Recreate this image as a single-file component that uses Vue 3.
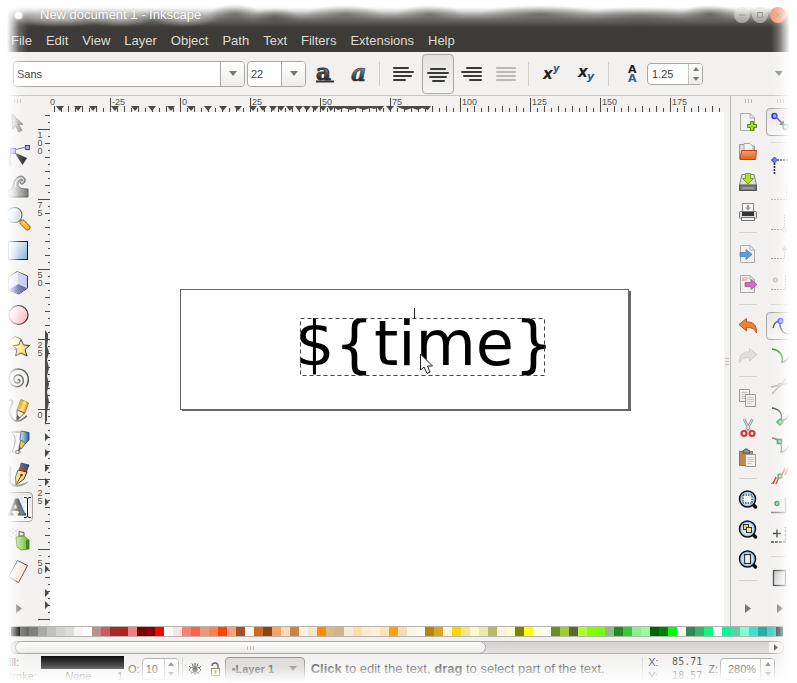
<script setup>
import { ref } from 'vue'

const menus = ['File', 'Edit', 'View', 'Layer', 'Object', 'Path', 'Text', 'Filters', 'Extensions', 'Help']

const family = ref('Sans')
const size = ref('22')
const spacing = ref('1.25')
const opacity = ref('10')
const zoom = ref('280%')
const scroll = ref(0)

const tools = [
  { name: 'Select', art: '<path d="M5 3L16 13.500L11.500 13.500L15 19.500L11.500 21L9 15L5.500 18Z" fill="url(#g-steel)" stroke="#777" stroke-width=".7"/>' },
  { name: 'Edit nodes', art: '<path d="M3 21C2 14 4 8 8 7C13 5 17 4.500 20 4.500" fill="none" stroke="#555"/><rect x="3.500" y="5.500" width="5" height="5" fill="#99f" stroke="#44e"/><rect x="18.500" y="2.500" width="4" height="4" fill="#aaf" stroke="#33e"/><path d="M7.500 9.500L20 15L15.500 22Z" fill="#222"/><rect x="1" y="20" width="3" height="3" fill="none" stroke="#aac"/>' },
  { name: 'Tweak', art: '<path d="M1 15C5 15 6 12 7 7C9 1 16-1 18 4C19 8 15 11 13 8C12 6 15 4 16 6C16 3 11 4 11 9C11 13 14 14 21 14V22H1Z" fill="url(#g-steel)" stroke="#666" stroke-width="1"/><path d="M8 12C8 6 11 3 15 3M14 7C16 8 18 4 15 3" fill="none" stroke="#fff" stroke-width="1"/>' },
  { name: 'Zoom', art: '<path d="M12 12L16 16" stroke="#777" stroke-width="3"/><path d="M15.500 15.500L20.500 20.500" stroke="#a55f00" stroke-width="6" stroke-linecap="round"/><path d="M15.500 15.500L20.500 20.500" stroke="#f9b52a" stroke-width="4" stroke-linecap="round"/><path d="M16 14.500L20.500 19" stroke="#ffe28a" stroke-width="1"/><circle cx="7.500" cy="8" r="7.500" fill="#eef5fb" stroke="#555" stroke-width="1.200"/><circle cx="7.500" cy="8" r="6" fill="url(#g-sky)" opacity=".5"/>' },
  { name: 'Rectangle', art: '<rect x="1.500" y="2.500" width="19" height="18" fill="url(#g-sky)" stroke="#111"/>' },
  { name: '3D box', art: '<path d="M10 0.500L20.500 5V17L12 23L1.500 19V6Z" fill="#f1f1fd" stroke="#333"/><path d="M11 1L20 5.500V16.500L11 13Z" fill="#c9c9f2"/><path d="M11 13L20 17L12 22.500L2 18.500Z" fill="#5c5ca8"/><path d="M2 6.500L11 1V13L2 18.500Z" fill="#e3e3fa"/>' },
  { name: 'Ellipse', art: '<circle cx="11.500" cy="12" r="9.500" fill="url(#g-pink)" stroke="#222" stroke-width="1.100"/>' },
  { name: 'Star', art: '<path d="M2 6L8 1.500L14 4L15 11L9 15L1 12Z" fill="#fff6c4" stroke="#777"/><path d="M14 4.500L16.500 10L22.500 10.500L18 14.500L20 21L14 18L8.500 21L10 14.500L5.500 10.500L11.800 10Z" fill="url(#g-gold)" stroke="#333" stroke-width="1"/>' },
  { name: 'Spiral', art: '<path d="M11 13.500C12 11 14 14 12 15.500C9 17.500 6 14 7 11C8.500 6.500 14.500 7 16 11.500C17.500 17 13 20.500 8.500 19.500C2.500 18 .5 11 3 7C6.500 0 16 .5 20 7C22 11 21.500 16 19 20" fill="none" stroke="#555" stroke-width="1.400"/>' },
  { name: 'Pencil', art: '<path d="M1 2C5-1 7 3 4 7C1 13 4 22 10 22C15 23 17 18 20 17" fill="none" stroke="#666" stroke-width="1.500"/><path d="M14 .5L21.500 4L18 14L10 11Z" fill="#f7a81b" stroke="#9a5a00" stroke-width=".7"/><path d="M17 2L19.500 3L16 13L13 12Z" fill="#ffe07a"/><path d="M10 11L17.500 14L10 21.500Z" fill="#fdf0c8" stroke="#444" stroke-width="1"/><path d="M10 15.500L13 18.500L9.500 22Z" fill="#222"/>' },
  { name: 'Bezier', art: '<path d="M2 1H13M2 1C9 2 10 10 5 21H14" fill="none" stroke="#777"/><rect x="0" y="19.500" width="3" height="3" fill="#fff" stroke="#888"/><rect x="9" y="19.500" width="3" height="3" fill="#fff" stroke="#555"/><path d="M14 0L22 1.500L22 9L18 13L13 9Z" fill="url(#g-blue)" stroke="#1d4563" stroke-width=".8"/><path d="M14 9L18.500 12.500L14 18L12 16Z" fill="#f1bd39" stroke="#333" stroke-width=".8"/><path d="M12 15L14.500 17.500L11 21Z" fill="#333"/>' },
  { name: 'Calligraphy', art: '<path d="M1 2C7 1 3 11 4 18C5 23 13 23 22 18C16 25 3 27 1 17C-1 10 5 3 1 2Z" fill="#888"/><path d="M14 0L22 2L20 7L13 5Z" fill="#245b83" stroke="#222" stroke-width=".7"/><path d="M12.500 4L20.500 6.500L20 9L11.500 7Z" fill="#cf1717"/><path d="M11 7L20 9L17 16L9 22L8.500 14Z" fill="#f6d565" stroke="#222" stroke-width="1"/><path d="M9.500 21L14.500 12" stroke="#222"/><circle cx="14.500" cy="12" r="1.300" fill="#222"/>' },
  { name: 'Text', active: true, art: '<text x="1" y="20" font-family="DejaVu Serif" font-weight="bold" font-size="23" fill="url(#g-letter)" stroke="#333" stroke-width=".8">A</text><path d="M16.500 2.500H19L20.500 3.500L22 2.500H23M20.500 3.500V21.500M16.500 22.500H19L20.500 21.500L22 22.500H23" fill="none" stroke="#fff" stroke-width="3"/><path d="M17 2.500H19L20.500 3.500L22 2.500H24M20.500 3.500V21.500M17 22.500H19L20.500 21.500L22 22.500H24" fill="none" stroke="#111"/>' },
  { name: 'Spray', art: '<g fill="#aaa"><circle cx="3" cy="4" r="1"/><circle cx="6" cy="2" r=".8"/><circle cx="6" cy="6" r=".9"/><circle cx="9" cy="4" r=".9"/><circle cx="2" cy="9" r=".9"/><circle cx="5" cy="10" r=".8"/><circle cx="9" cy="8" r=".8"/></g><path d="M12 4.500L17 5.500V9H12Z" fill="#eee4bb" stroke="#444"/><path d="M9 10L17 9L22 13L22 22L14 23L10 20Z" fill="url(#g-green)" stroke="#4c7a10" stroke-width=".8"/><path d="M19 13L22 13V22L19 22Z" fill="#3e8a10"/>' },
  { name: 'Eraser', art: '<path d="M10.500 1.500L20.500 6.500L11.500 23.500L1.500 18Z" fill="url(#g-eraser)" stroke="#444" stroke-width="1"/><path d="M11 3L3 17.500" stroke="#fff"/>' },
]

const sheet = '<path d="M2.500 1.500H12L16.500 6V18.500H2.500Z" fill="#f0f0ee" stroke="#aaa"/><path d="M12 1.500V6H16.500Z" fill="#fff" stroke="#aaa"/>'
const lens = '<path d="M14.500 14L17.500 17" stroke="#111" stroke-width="3.500" stroke-linecap="round"/><circle cx="9.500" cy="9" r="8" fill="#a8c6e8" stroke="#111" stroke-width="1.500"/><circle cx="9.500" cy="9" r="6" fill="#cfe1f4"/>'
const page = (x, y) => `<path d="M${x} ${y}h10v12h-10z" fill="#f0f0ee" stroke="#999"/><path d="M${x + 2} ${y + 3}h6M${x + 2} ${y + 5}h6M${x + 2} ${y + 7}h6M${x + 2} ${y + 9}h4" stroke="#c4c4c0"/>`

const commands = [
  { name: 'New', art: sheet + '<path d="M13 10.500h3v3h3v3h-3v3h-3v-3h-3v-3h3z" fill="#a8d828" stroke="#5c8a0a" transform="translate(-.5 -1)"/>' },
  { name: 'Open', art: '<path d="M1.500 17V2.500H7L8 4H16.500V9" fill="#ddd" stroke="#999"/><path d="M6 1.500H12L15 4.500V10H6Z" fill="#f5f5f5" stroke="#aaa"/><path d="M3.500 8.500H18.500L17.500 17.500H2Z" fill="url(#g-orange)" stroke="#c4400c"/>' },
  { name: 'Save', art: '<path d="M4 2.500H16L18.500 13V18.500H1.500V13Z" fill="#ddd" stroke="#888"/><path d="M1.500 13H18.500V18.500H1.500Z" fill="#777" stroke="#555"/><path d="M4 16H16" stroke="#bbb"/><path d="M7.500 1.500H12.500V6.500H15.500L10 12L4.500 6.500H7.500Z" fill="#b4e02c" stroke="#7aa81a"/>' },
  { name: 'Print', art: '<path d="M4.500 9V1.500H15.500V9" fill="#f6f6f6" stroke="#888"/><path d="M10 3V6" stroke="#999" stroke-width="2"/><path d="M7 5.500H13L10 8.500Z" fill="#999"/><rect x="1.500" y="9.500" width="17" height="7" rx="1" fill="#ddd" stroke="#777"/><rect x="4" y="10" width="12" height="4" fill="#333"/><rect x="3.500" y="15.500" width="13" height="3" fill="#f2f2f2" stroke="#777"/>' },
  { sep: true },
  { name: 'Import', art: sheet + '<path d="M2 8.500h6v-3l6 5l-6 5v-3h-6z" fill="#5f9fd8" stroke="#4a80b4" stroke-width=".8"/>' },
  { name: 'Export', art: sheet + '<path d="M4 4h6M4 6h5" stroke="#d5957a"/><path d="M7 8.500h6v-3l6 5l-6 5v-3h-6z" fill="#d668cf" stroke="#a850a5" stroke-width=".8"/>' },
  { sep: true },
  { name: 'Undo', art: '<path d="M1 8.500L8.500 2.500V6C15 5.500 19 9 18.500 17C16 12 13 11.500 8.500 11.500V15Z" fill="#f08038" stroke="#b85a20"/>' },
  { name: 'Redo', dim: true, art: '<path d="M19 8.500L11.500 2.500V6C5 5.500 1 9 1.500 17C4 12 7 11.500 11.500 11.500V15Z" fill="#cfd3cb" stroke="#a9ada6"/>' },
  { sep: true },
  { name: 'Copy', art: page(1.5, 1.5) + page(7.5, 6.5) },
  { name: 'Cut', art: '<path d="M6 1L12 13M14.500 1L8 13" stroke="#888" stroke-width="2.600"/><path d="M6 1L12 13M14.500 1L8 13" stroke="#eee" stroke-width="1"/><circle cx="6" cy="15.500" r="2.500" fill="none" stroke="#d3363e" stroke-width="2.200"/><circle cx="14" cy="15.500" r="2.500" fill="none" stroke="#d3363e" stroke-width="2.200"/>' },
  { name: 'Paste', art: '<rect x="1.500" y="3.500" width="13" height="14" fill="#b98a4c" stroke="#9b7640"/><path d="M5 5V2.500H6.500L7 1H9.500L10 2.500H11.500V5Z" fill="#999" stroke="#555"/>' + page(7.5, 6.5) },
  { sep: true },
  { name: 'Zoom selection', art: lens + '<rect x="5" y="5" width="9" height="8" fill="#fff" stroke="#111" stroke-dasharray="1.500 1"/>' },
  { name: 'Zoom drawing', art: lens + '<rect x="5.500" y="4.500" width="5" height="5" fill="#f3d36b" stroke="#333"/><rect x="8.500" y="7.500" width="5" height="5" fill="#f5e6a0" stroke="#333"/>' },
  { name: 'Zoom page', art: lens + '<rect x="6.500" y="4.500" width="6" height="9" fill="#eee" stroke="#333" stroke-width="1.200"/>' },
  { sep: true },
]

const snaps = [
  { name: 'Enable snapping', active: true, art: '<path d="M7 6L14 13" stroke="#333" stroke-width="1.500"/><path d="M15 14L9.500 12.500L13.500 8.500Z" fill="#333"/><circle cx="4.500" cy="4" r="2.500" fill="#99f" stroke="#22e" stroke-width="1.500"/><circle cx="15.500" cy="15" r="2.500" fill="#cfc" stroke="#4a9a5a" stroke-width="1.500"/>' },
  { sep: true },
  { name: 'Snap bounding boxes', art: '<path d="M4 6H19M4.500 6V20" stroke="#111" stroke-width="1.600" stroke-dasharray="2 1"/><path d="M4.500 3L7.500 6L4.500 9L1.500 6Z" fill="#66f" stroke="#22e"/>' },
  { name: 'Snap to edges', dim: true, art: '<path d="M1 15.500H16.500V1" fill="none" stroke="#777" stroke-dasharray="2 1"/>' },
  { name: 'Snap to corners', dim: true, art: '<path d="M1 15.500H14.500V1" fill="none" stroke="#555" stroke-dasharray="2 1"/><path d="M14.500 12.500L17.500 15.500L14.500 18.500L11.500 15.500Z" fill="#ccc" stroke="#888"/>' },
  { name: 'Snap edge midpoints', dim: true, art: '<path d="M1 14.500H14.500V1" fill="none" stroke="#444" stroke-dasharray="2 1"/><circle cx="14.500" cy="5" r="2" fill="#888"/>' },
  { name: 'Snap centers', dim: true, art: '<path d="M1 15.500H15.500V1" fill="none" stroke="#555" stroke-dasharray="2 1"/><circle cx="5.500" cy="6" r="2" fill="#ccc" stroke="#555"/>' },
  { sep: true },
  { name: 'Snap nodes', active: true, art: '<path d="M3 12C4 7 7 5 10 5C9 11 12 18 19 18" fill="none" stroke="#444" stroke-width="1.300"/><circle cx="10.500" cy="5" r="2.500" fill="#99f" stroke="#33f" stroke-width="1.300"/>' },
  { name: 'Snap to paths', art: '<path d="M2 3C9 4 14 9 12 16C17 16 18 12 19 10" fill="none" stroke="#2d8a35" stroke-width="1.600"/>' },
  { name: 'Snap path intersections', dim: true, art: '<path d="M1 11L19 7M2 18L16 3" stroke="#777" stroke-width="1.300"/><circle cx="10" cy="9" r="2.200" fill="#999"/>' },
  { name: 'Snap cusp nodes', art: '<path d="M2 2C9 3 13 7 11 14C16 15 18 11 19 9" fill="none" stroke="#444" stroke-width="1.300"/><path d="M10 13L13 16L10 19L7 16Z" fill="#9cf" stroke="#2a9a2a" stroke-width="1.400"/>' },
  { name: 'Snap smooth nodes', art: '<path d="M2 2C9 3 13 8 11 16C16 16 18 11 19 9" fill="none" stroke="#777" stroke-width="1.300"/><rect x="7.500" y="3.500" width="4" height="4" fill="#9cf" stroke="#2a9a2a" stroke-width="1.500"/>' },
  { name: 'Snap line midpoints', art: '<path d="M1 18L17 3" stroke="#888"/><path d="M3 18L6 11M6 18L9 11M12 9L15 2M15 9L18 2" stroke="#d22" stroke-width="1.400"/><circle cx="10" cy="10" r="2" fill="#bdb" stroke="#2a9a2a" stroke-width="1.300"/>' },
  { name: 'Snap object centers', art: '<path d="M1 16.500H15.500V2" fill="none" stroke="#888" stroke-width="1.500"/><circle cx="7" cy="7.500" r="2" fill="#9cf" stroke="#2a9a2a" stroke-width="1.300"/>' },
  { name: 'Snap rotation centers', art: '<path d="M1 16H15.500V1" fill="none" stroke="#444" stroke-width="1.400" stroke-dasharray="3 1"/><path d="M3 7.500H11M7 3.500V11.500" stroke="#333" stroke-width="1.500"/>' },
  { sep: true },
  { name: 'Snap page border', art: '<rect x="3.500" y="2.500" width="12" height="15" fill="url(#g-page)" stroke="#444" stroke-width="1.300"/>' },
]

const swatches = [
  'black', 'dimgray', 'gray', 'darkgray', 'silver', 'lightgray', 'gainsboro', 'whitesmoke', 'white', 'rosybrown',
  'indianred', 'brown', 'firebrick', 'lightcoral', 'maroon', 'darkred', 'red', 'snow', 'mistyrose', 'salmon',
  'tomato', 'darksalmon', 'coral', 'orangered', 'lightsalmon', 'sienna', 'seashell', 'chocolate', 'saddlebrown',
  'sandybrown', 'peachpuff', 'peru', 'linen', 'bisque', 'darkorange', 'burlywood', 'tan', 'antiquewhite',
  'navajowhite', 'blanchedalmond', 'papayawhip', 'moccasin', 'orange', 'wheat', 'oldlace', 'floralwhite',
  'darkgoldenrod', 'goldenrod', 'cornsilk', 'gold', 'khaki', 'lemonchiffon', 'palegoldenrod', 'darkkhaki', 'beige',
  'lightgoldenrodyellow', 'olive', 'yellow', 'lightyellow', 'ivory', 'olivedrab', 'yellowgreen', 'darkolivegreen',
  'greenyellow', 'chartreuse', 'lawngreen', 'darkseagreen', 'forestgreen', 'limegreen', 'lightgreen', 'palegreen',
  'darkgreen', 'green', 'lime', 'honeydew', 'seagreen', 'mediumseagreen', 'springgreen', 'mintcream',
  'mediumspringgreen', 'mediumaquamarine', 'aquamarine', 'turquoise', 'lightseagreen', 'mediumturquoise',
  'darkslategray',
]

// Horizontal ruler: 70px per 25 units, origin at 130px
const hTicks = []
for (let i = -18; i < 78; i++) {
  const major = i % 10 === 0
  hTicks.push({ x: 130 + i * 7, top: major ? 2 : i % 2 ? 12 : 10 })
}
const hLabels = [-50, -25, 0, 25, 50, 75, 100, 125, 150, 175].map((v) => ({ v, x: 132 + (v / 25) * 70 }))
const hMarks = [10, 28, 43, 65, 85, 102, 121, 141, 158, 173, 188, 203, 213, 223, 231, 240, 249, 257, 265, 273, 281, 330, 340]

// Vertical ruler: origin at 297px, values grow upward
const vTicks = []
for (let i = -42; i < 32; i++) {
  const major = i % 10 === 0
  vTicks.push({ y: 297 + i * 7, left: major ? 4 : i % 2 ? 14 : 11 })
}
const vLabels = [100, 75, 50, 25, 0, -25, -50].map((v) => ({ digits: [...String(v)], y: 297 - (v / 25) * 70 }))
const vMarks = [325, 341, 356, 370, 390, 457, 481, 493]
</script>

<template>
  <div class="window">
    <svg class="defs" aria-hidden="true">
      <defs>
        <linearGradient id="g-steel" x2="1"><stop stop-color="#ddd" /><stop offset="1" stop-color="#777" /></linearGradient>
        <linearGradient id="g-sky" x2="1" y2="1"><stop stop-color="#fff" /><stop offset="1" stop-color="#7fa9d0" /></linearGradient>
        <linearGradient id="g-pink" x2="1" y2="1"><stop stop-color="#fff" /><stop offset="1" stop-color="#ffa9b4" /></linearGradient>
        <linearGradient id="g-gold" x2="1" y2="1"><stop stop-color="#fff8c8" /><stop offset="1" stop-color="#f2cf45" /></linearGradient>
        <linearGradient id="g-blue" x2="1"><stop stop-color="#c7e0f2" /><stop offset="1" stop-color="#24618d" /></linearGradient>
        <linearGradient id="g-green" x2="1"><stop stop-color="#b6e889" /><stop offset="1" stop-color="#63b81f" /></linearGradient>
        <linearGradient id="g-eraser" x2="1" y2="1"><stop stop-color="#fff" /><stop offset="1" stop-color="#fbd0c0" /></linearGradient>
        <linearGradient id="g-orange" x2="0" y2="1"><stop stop-color="#f9a16c" /><stop offset="1" stop-color="#ea5a1a" /></linearGradient>
        <linearGradient id="g-page" x2="1" y2="1"><stop stop-color="#bbb" /><stop offset="1" stop-color="#fff" /></linearGradient>
        <linearGradient id="g-ink" x2="0" y2="1"><stop offset=".3" stop-color="#8a9194" /><stop offset=".8" stop-color="#222628" /></linearGradient>
        <linearGradient id="g-letter" x2="0" y2="1"><stop offset=".2" stop-color="#222" /><stop offset=".8" stop-color="#777" /></linearGradient>
      </defs>
    </svg>

    <header class="titlebar">
      <span class="app-dot"></span>
      <h1>New document 1 - Inkscape</h1>
      <div class="controls">
        <button aria-label="Minimize"><svg viewBox="0 0 16 16"><path d="M5 8H11" /></svg></button>
        <button aria-label="Maximize"><svg viewBox="0 0 16 16"><path d="M5.500 5.500H10.500V10.500H5.500Z" /></svg></button>
        <button class="close" aria-label="Close"><svg viewBox="0 0 16 16"><path d="M5.500 5.500L10.500 10.500M10.500 5.500L5.500 10.500" /></svg></button>
      </div>
    </header>

    <nav class="menubar">
      <a v-for="m in menus" :key="m" href="#">{{ m }}</a>
    </nav>

    <div class="toolbar">
      <div class="combo family">
        <input v-model="family" aria-label="Font family" />
        <button aria-label="Choose font"><svg viewBox="0 0 8 5"><path d="M0 0H8L4 5Z" /></svg></button>
      </div>
      <div class="combo size">
        <input v-model="size" aria-label="Font size" />
        <button aria-label="Choose size"><svg viewBox="0 0 8 5"><path d="M0 0H8L4 5Z" /></svg></button>
      </div>
      <button class="flat bold" aria-label="Bold">
        <svg viewBox="0 0 24 24"><text x="4" y="18" font-family="DejaVu Serif" font-weight="bold" font-size="23" fill="url(#g-ink)" stroke="#333" stroke-width="1">a</text><path d="M4 19.500H22" stroke="#333" stroke-width="2" /></svg>
      </button>
      <button class="flat italic" aria-label="Italic">
        <svg viewBox="0 0 24 24"><text x="4" y="19" font-family="DejaVu Serif" font-style="italic" font-weight="bold" font-size="24" fill="url(#g-ink)" stroke="#333" stroke-width=".6">a</text></svg>
      </button>
      <i class="vsep"></i>
      <button class="flat align" aria-label="Align left">
        <svg viewBox="0 0 22 22" class="bars"><path d="M2 5H16M2 9H21M2 13H19M2 17H13" /></svg>
      </button>
      <button class="flat align pressed" aria-label="Align center">
        <svg viewBox="0 0 22 22" class="bars"><path d="M4 6H18M1 10H21M3 14H19M6 18H17" /></svg>
      </button>
      <button class="flat align" aria-label="Align right">
        <svg viewBox="0 0 22 22" class="bars"><path d="M6 5H20M1 9H20M3 13H20M9 17H20" /></svg>
      </button>
      <button class="flat align dim" aria-label="Justify">
        <svg viewBox="0 0 22 22" class="bars"><path d="M2 5H20M2 9H20M2 13H20M2 17H20" /></svg>
      </button>
      <i class="vsep near"></i>
      <button class="flat script" aria-label="Superscript">
        <svg viewBox="0 0 24 24"><text x="3" y="17" font-family="DejaVu Sans" font-weight="bold" font-style="italic" font-size="15" fill="#222">x</text><text x="13" y="10" font-family="DejaVu Sans" font-weight="bold" font-style="italic" font-size="10" fill="#2c5a87">y</text></svg>
      </button>
      <button class="flat script" aria-label="Subscript">
        <svg viewBox="0 0 24 24"><text x="3" y="15" font-family="DejaVu Sans" font-weight="bold" font-style="italic" font-size="15" fill="#222">x</text><text x="12" y="18" font-family="DejaVu Sans" font-weight="bold" font-style="italic" font-size="11" fill="#2c5a87">y</text></svg>
      </button>
      <i class="vsep near"></i>
      <label class="leading" for="spacing" aria-label="Line spacing">
        <svg viewBox="0 0 12 22"><text x="2" y="10" font-family="DejaVu Sans" font-weight="bold" font-size="11" fill="#222">A</text><text x="2" y="19" font-family="DejaVu Sans" font-weight="bold" font-size="11" fill="#2c5f90">A</text></svg>
      </label>
      <div class="spin wide">
        <input id="spacing" v-model="spacing" />
        <div class="steps">
          <button aria-label="Increase"><svg viewBox="0 0 6 4"><path d="M0 4H6L3 0Z" /></svg></button>
          <button aria-label="Decrease"><svg viewBox="0 0 6 4"><path d="M0 0H6L3 4Z" /></svg></button>
        </div>
      </div>
      <button class="flat overflow" aria-label="More"><svg viewBox="0 0 8 5"><path d="M0 0H8L4 5Z" /></svg></button>
    </div>

    <main class="workspace">
      <aside class="tools">
        <i class="grip"></i>
        <button v-for="t in tools" :key="t.name" :class="{ active: t.active }" :aria-label="t.name">
          <svg viewBox="0 0 24 24" v-html="t.art"></svg>
        </button>
        <button class="more" aria-label="More tools"><svg viewBox="0 0 6 9"><path d="M0 0V9L6 4.500Z" /></svg></button>
      </aside>

      <section class="editor">
        <svg class="hruler">
          <path v-for="t in hTicks" :key="t.x" :d="`M${t.x + 0.5} ${t.top}V16`" />
          <path d="M282 10H328L325 13L320 12L314 14L308 12L301 14L294 12L288 14Z" class="mark" />
          <path d="M346 10H381L378 14L372 12L368 14L362 12L356 14L350 12Z" class="mark" />
          <path v-for="m in hMarks" :key="'m' + m" :d="`M${m - 4} 10H${m + 4}L${m} 15Z`" class="mark" />
          <text v-for="l in hLabels" :key="'l' + l.v" :x="l.x" y="9">{{ l.v }}</text>
        </svg>
        <svg class="vruler">
          <path v-for="t in vTicks" :key="t.y" :d="`M${t.left} ${t.y + 0.5}H16`" />
          <path d="M11 218L14 222V228L13 234L15 240L13 248L15 256L13 264L15 272L13 280L15 290L13 300V308L11 313Z" class="mark" />
          <path v-for="m in vMarks" :key="'m' + m" :d="`M11 ${m - 4}V${m + 4}L15 ${m}Z`" class="mark" />
          <template v-for="l in vLabels" :key="'l' + l.y">
            <text v-for="(d, i) in l.digits" :key="i" x="6" :y="l.y + 9 + i * 8" text-anchor="middle">{{ d }}</text>
          </template>
        </svg>
        <svg class="canvas">
          <rect x="132" y="179" width="449" height="120" fill="#666" />
          <rect x="130.500" y="177.500" width="448" height="120" fill="#fff" stroke="#666" />
          <text x="245" y="253" class="sample">${time}</text>
          <rect x="250.500" y="206.500" width="244" height="57" fill="none" stroke="#444" stroke-dasharray="4 3" />
          <path d="M364.500 196V207" stroke="#222" />
          <path d="M370.500 242V258L374 255L377 261.500L380 260L377.500 254H382.500Z" fill="#fff" stroke="#222" />
        </svg>
      </section>

      <div class="splitter"><i></i></div>

      <aside class="commands">
        <i class="grip"></i>
        <template v-for="(c, i) in commands" :key="i">
          <hr v-if="c.sep" />
          <button v-else :class="{ dim: c.dim }" :aria-label="c.name"><svg viewBox="0 0 20 20" v-html="c.art"></svg></button>
        </template>
        <button class="more" aria-label="More commands"><svg viewBox="0 0 6 9"><path d="M0 0V9L6 4.500Z" /></svg></button>
      </aside>
      <aside class="commands snaps">
        <i class="grip"></i>
        <template v-for="(c, i) in snaps" :key="i">
          <hr v-if="c.sep" />
          <button v-else :class="{ dim: c.dim, active: c.active }" :aria-label="c.name"><svg viewBox="0 0 20 20" v-html="c.art"></svg></button>
        </template>
        <button class="more" aria-label="More snaps"><svg viewBox="0 0 6 9"><path d="M0 0V9L6 4.500Z" /></svg></button>
      </aside>
    </main>

    <div class="palette">
      <button class="none" aria-label="No paint"><svg viewBox="0 0 9 9"><path d="M1 1L8 8M8 1L1 8" stroke="#c33" /></svg></button>
      <div class="strip">
        <button v-for="s in swatches" :key="s" :style="{ background: s }" :aria-label="s"></button>
      </div>
      <button class="scroll" aria-label="Palette menu"><svg viewBox="0 0 5 7"><path d="M5 0V7L0 3.500Z" fill="#999" /></svg></button>
    </div>

    <div class="hscroll">
      <div class="trough">
        <button class="thumb" aria-label="Scroll position"><i class="grip"></i></button>
        <button class="end" aria-label="Scroll right" @click="scroll++"><svg viewBox="0 0 5 8"><path d="M0 0V8L5 4Z" /></svg></button>
      </div>
    </div>

    <footer class="status">
      <div class="paint">
        <span class="lab">Fill:</span><span class="fill"></span>
        <span class="lab">Stroke:</span><span class="stroke"><em>None</em><span>1</span></span>
      </div>
      <label for="opacity" class="small">O:</label>
      <div class="spin">
        <input id="opacity" v-model="opacity" />
        <div class="steps">
          <button aria-label="Increase opacity"><svg viewBox="0 0 6 4"><path d="M0 4H6L3 0Z" /></svg></button>
          <button aria-label="Decrease opacity"><svg viewBox="0 0 6 4"><path d="M0 0H6L3 4Z" /></svg></button>
        </div>
      </div>
      <i class="vsep"></i>
      <button class="flat glyph" aria-label="Layer visibility">
        <svg viewBox="0 0 14 14"><path d="M1 8C4 3.500 10 3.500 13 8C10 12 4 12 1 8Z" fill="#fff" stroke="#222" /><circle cx="7" cy="7.500" r="2.600" fill="#222" /><path d="M1 4L3 6M4 1.500L5 4M7 1V4M10 1.500L9 4M13 4L11 6M3 12L4 10.500M7 13V11M11 12L10 10.500" stroke="#222" /></svg>
      </button>
      <button class="flat glyph" aria-label="Layer lock">
        <svg viewBox="0 0 14 14"><path d="M4 4C4 0 10 0 10 4V7" fill="none" stroke="#333" stroke-width="1.500" /><rect x="3.500" y="6.500" width="8" height="7" fill="#f2eeb0" stroke="#333" /><path d="M7.500 8.500V11.500" stroke="#333" stroke-width="1.500" /></svg>
      </button>
      <div class="layer">
        <select aria-label="Current layer"><option>•Layer 1</option></select>
        <svg viewBox="0 0 8 5"><path d="M0 0H8L4 5Z" /></svg>
      </div>
      <p class="hint"><b>Click</b> to edit the text, <b>drag</b> to select part of the text.</p>
      <i class="vsep"></i>
      <div class="coords">
        <span>X:</span><code>85.71</code>
        <span>Y:</span><code>18.57</code>
      </div>
      <label for="zoom" class="small">Z:</label>
      <div class="spin zoom">
        <input id="zoom" v-model="zoom" />
        <div class="steps">
          <button aria-label="Zoom in"><svg viewBox="0 0 6 4"><path d="M0 4H6L3 0Z" /></svg></button>
          <button aria-label="Zoom out"><svg viewBox="0 0 6 4"><path d="M0 0H6L3 4Z" /></svg></button>
        </div>
      </div>
    </footer>

    <div class="fade left"></div>
    <div class="fade right"></div>
    <div class="fade bottom"></div>
  </div>
</template>

<style>
body {
  margin: 0;
  background: #fff;
}
</style>

<style scoped>
.window {
  position: relative;
  display: flex;
  flex-direction: column;
  min-height: 100vh;
  overflow: hidden;
  background: #f2f1f0;
  color: #3c3c3c;
  font: 11px/14px "Liberation Sans", Arial, sans-serif;
}
.defs {
  position: absolute;
  width: 0;
  height: 0;
}
button {
  display: flex;
  align-items: center;
  justify-content: center;
  margin: 0;
  padding: 0;
  border: 0;
  background: none;
  color: inherit;
  font: inherit;
}
input,
select {
  min-width: 0;
  margin: 0;
  padding: 0;
  border: 0;
  background: none;
  color: inherit;
  font: inherit;
  outline: 0;
}

.titlebar {
  display: flex;
  align-items: center;
  box-sizing: border-box;
  height: 28px;
  padding: 2px 11px 0 15px;
  background:
    radial-gradient(ellipse 50px 9px at 60px 18px, #fff8, #fff0),
    radial-gradient(ellipse 34px 9px at 120px 18px, #fff8, #fff0),
    radial-gradient(ellipse 34px 9px at 185px 18px, #fff8, #fff0),
    radial-gradient(ellipse 26px 10px at 235px 14px, #3c3b3788, #3c3b3700),
    radial-gradient(ellipse 24px 9px at 275px 17px, #3c3b3788, #3c3b3700),
    radial-gradient(ellipse 40px 9px at 345px 14px, #3c3b3777, #3c3b3700),
    radial-gradient(ellipse 34px 9px at 430px 14px, #3c3b3777, #3c3b3700),
    radial-gradient(ellipse 60px 9px at 540px 14px, #3c3b3788, #3c3b3700),
    radial-gradient(ellipse 60px 9px at 640px 16px, #3c3b3766, #3c3b3700),
    radial-gradient(ellipse 30px 9px at 710px 14px, #3c3b3799, #3c3b3700),
    linear-gradient(#fff 7px, #dededd 11px, #a3a29f 15px, #6b6a66 20px, #44433f 26px, #3c3b37 28px);
}
.app-dot {
  width: 7px;
  height: 7px;
  margin-right: 18px;
  border-radius: 50%;
  background: #fff;
  box-shadow: 0 0 3px #fff;
}
h1 {
  flex: 1;
  margin: 0;
  color: #fff;
  font: 13px/16px "Liberation Sans", Arial, sans-serif;
  text-shadow: 0 0 2px #6668;
}
.controls {
  display: flex;
  gap: 2px;
}
.controls button {
  width: 16px;
  height: 16px;
  border-radius: 50%;
  background: #e4e3e088;
}
.controls .close {
  background: #f59a74;
}
.controls svg {
  width: 16px;
  height: 16px;
  fill: none;
  stroke: #9a9a96;
}

.menubar {
  display: flex;
  align-items: center;
  box-sizing: border-box;
  gap: 14px;
  height: 24px;
  padding: 2px 0 0 11px;
  background: #3c3b37;
}
.menubar a {
  color: #dfdbd2;
  font-size: 13px;
  line-height: 16px;
  text-decoration: none;
}

.toolbar {
  display: flex;
  align-items: center;
  box-sizing: border-box;
  height: 44px;
  padding: 0 14px 0 13px;
  border-bottom: 1px solid #c8c6c4;
  background: #f2f1f0;
}
.combo,
.spin {
  display: flex;
  flex: none;
  box-sizing: border-box;
  overflow: hidden;
  border: 1px solid #aaa8a5;
  border-radius: 4px;
  background: #fff;
}
.combo {
  height: 26px;
}
.combo input,
.spin input {
  flex: 1;
  width: 0;
  padding-left: 3px;
}
.combo button {
  width: 24px;
  border-left: 1px solid #aaa8a5;
  background: linear-gradient(#fff, #ececea);
}
.combo svg,
.overflow svg,
.layer svg {
  width: 8px;
  height: 5px;
  fill: #777;
}
.family {
  width: 232px;
}
.size {
  width: 59px;
  margin: 0 6px 0 2px;
}
.flat {
  flex: none;
}
.bold svg,
.italic svg,
.script svg {
  width: 24px;
  height: 24px;
  overflow: visible;
}
.italic {
  margin: 0 8px 0 11px;
}
.vsep {
  flex: none;
  width: 1px;
  height: 24px;
  background: #d0cecb;
}
.align {
  box-sizing: border-box;
  width: 32px;
  height: 40px;
  margin-left: 2px;
}
.vsep + .align {
  margin: 0 1px 0 7px;
}
.align svg {
  width: 22px;
  height: 22px;
}
.align.pressed {
  border: 1px solid #aaa8a5;
  border-radius: 4px;
  background: linear-gradient(#e4e3e1, #f4f4f3);
}
.bars {
  fill: none;
  stroke: #3a3a3a;
  stroke-width: 2;
  stroke-linecap: round;
}
.align.dim {
  opacity: 0.3;
}
.near {
  margin: 0 11px 0 6px;
}
.script + .script {
  margin: 0 0 0 11px;
}
.script + .vsep {
  margin: 0 17px 0 9px;
}
.leading {
  display: flex;
  margin-right: 9px;
}
.leading svg {
  width: 12px;
  height: 22px;
}
.spin {
  width: 37px;
  height: 22px;
}
.spin.wide {
  width: 56px;
}
.spin.wide input {
  padding-left: 4px;
}
.spin.zoom {
  width: 55px;
}
.spin.zoom input {
  padding-left: 7px;
}
.steps {
  display: grid;
  width: 13px;
  border-left: 1px solid #c5c3c0;
  background: linear-gradient(#fff, #ececea);
}
.steps svg {
  width: 6px;
  height: 4px;
  fill: #777;
}
.overflow {
  margin-left: auto;
}

.workspace {
  display: flex;
  flex: 1;
}
.tools,
.commands {
  display: flex;
  flex: none;
  flex-direction: column;
  align-items: center;
  box-sizing: border-box;
  width: 34px;
  padding-bottom: 7px;
}
.grip {
  width: 7px;
  height: 4px;
  background: repeating-linear-gradient(90deg, #bbb 0 1px, #f2f1f000 1px 3px);
}
.tools .grip,
.commands .grip {
  margin: 3px 0 4px;
}
.tools button {
  box-sizing: border-box;
  width: 32px;
  height: 30px;
  margin: 1px 0;
  padding-left: 4px;
  border: 1px solid transparent;
  border-radius: 4px;
}
.tools svg {
  flex: none;
  width: 24px;
  height: 24px;
  overflow: visible;
}
.tools .active,
.commands .active {
  border: 1px solid #aaa8a5;
  background: linear-gradient(#e6e5e3, #f6f6f5);
}
.tools .more,
.commands .more {
  height: 20px;
  margin-top: auto;
}
.tools .more svg,
.commands .more svg {
  width: 6px;
  height: 9px;
  fill: #777;
}
.editor {
  display: grid;
  flex: 1;
  grid-template-columns: 16px 1fr;
  grid-template-rows: 16px 1fr;
}
.hruler,
.vruler,
.canvas {
  display: block;
  width: 100%;
  height: 100%;
  overflow: hidden;
}
.hruler {
  grid-column: 2;
}
.hruler path,
.vruler path {
  fill: none;
  stroke: #4a4a4a;
}
.hruler .mark,
.vruler .mark {
  fill: #4a4a4a;
  stroke: none;
}
.hruler text,
.vruler text {
  fill: #555;
  font-size: 9px;
}
.canvas {
  background: #fff;
}
.sample {
  fill: #000;
  font-family: "DejaVu Sans", sans-serif;
  font-size: 62px;
}
.splitter {
  display: flex;
  align-items: center;
  justify-content: center;
  width: 6px;
  border-right: 1px solid #bbb9b6;
}
.splitter i {
  width: 4px;
  height: 7px;
  background: repeating-linear-gradient(#c0bebb 0 1px, #f2f1f000 1px 3px);
}
.commands button {
  box-sizing: border-box;
  width: 28px;
  height: 28px;
  margin: 1px 0;
  border: 1px solid transparent;
  border-radius: 4px;
}
.commands svg {
  flex: none;
  width: 20px;
  height: 20px;
}
.commands .dim svg {
  opacity: 0.5;
}
.commands hr {
  width: 18px;
  height: 1px;
  margin: 5px 0 6px;
  border: 0;
  background: #d5d3d0;
}
.snaps {
  width: 32px;
  padding-right: 2px;
}

.palette {
  display: flex;
  align-items: center;
  height: 11px;
  padding-left: 2px;
}
.palette button {
  flex: none;
  width: 9px;
  height: 9px;
}
.strip {
  display: flex;
  flex: 1;
  overflow: hidden;
  border: solid #b5b3b0;
  border-width: 1px 0;
}
.palette .scroll {
  width: 14px;
}
.palette .scroll svg {
  width: 5px;
  height: 7px;
}
.hscroll {
  padding: 4px 13px 0 10px;
}
.trough {
  display: flex;
  justify-content: space-between;
  box-sizing: border-box;
  height: 13px;
  border: 1px solid #b5b3b0;
  border-radius: 7px;
  background: linear-gradient(#d5d3d1, #e2e0de);
}
.thumb {
  width: 61%;
  margin: -1px 0 -1px 4px;
  border: 1px solid #aaa8a5;
  border-radius: 7px;
  background: linear-gradient(#fff, #e9e8e6);
}
.end {
  width: 14px;
  border-radius: 0 7px 7px 0;
  background: #f4f3f2;
}
.end svg {
  width: 4px;
  height: 7px;
  fill: #555;
}

.status {
  display: flex;
  align-items: center;
  height: 29px;
  padding-right: 22px;
  background: #f2f1f0;
}
.paint {
  display: grid;
  flex: none;
  grid-template-columns: 39px 83px;
  grid-template-rows: 14px 14px;
  padding-left: 2px;
}
.fill {
  margin-top: 1px;
  background: #000;
}
.stroke {
  display: flex;
  justify-content: space-between;
  padding: 0 1px 0 24px;
}
.small {
  flex: none;
  margin: 0 2px 0 4px;
}
.status > .vsep {
  margin: 0 5px 0 3px;
}
.glyph {
  width: 14px;
  margin-right: 6px;
}
.glyph svg {
  width: 14px;
  height: 14px;
}
.layer {
  display: flex;
  flex: none;
  align-items: center;
  box-sizing: border-box;
  width: 80px;
  height: 24px;
  margin: 0 6px 0 -3px;
  padding: 0 7px 0 6px;
  border: 1px solid #8d8b88;
  border-radius: 4px;
  background: linear-gradient(#d9d8d6, #c6c4c2);
  font-weight: bold;
}
.layer select {
  flex: 1;
  appearance: none;
}
.hint {
  flex: 1;
  margin: 0;
  font-size: 13px;
  line-height: 16px;
  white-space: nowrap;
}
.coords {
  display: grid;
  flex: none;
  grid-template-columns: 22px 32px;
  align-items: center;
}
.coords code {
  font: 10px/14px "DejaVu Sans Mono", monospace;
  text-align: right;
}
.coords + .small {
  margin-left: 6px;
}

.fade {
  position: absolute;
  pointer-events: none;
}
.left {
  inset: 0 auto 0 0;
  width: 30px;
  background: linear-gradient(90deg, #fff 7px, #ffffffa0 13px, #ffffff38 19px, #fff0 28px);
}
.right {
  inset: 0 0 0 auto;
  width: 30px;
  background: linear-gradient(90deg, #fff0 4px, #ffffff48 12px, #ffffffb0 18px, #fff 23px);
}
.bottom {
  inset: auto 0 0 0;
  height: 29px;
  background: linear-gradient(#fff0, #ffffff50 12px, #ffffffb0 20px, #fff 28px);
}
</style>
